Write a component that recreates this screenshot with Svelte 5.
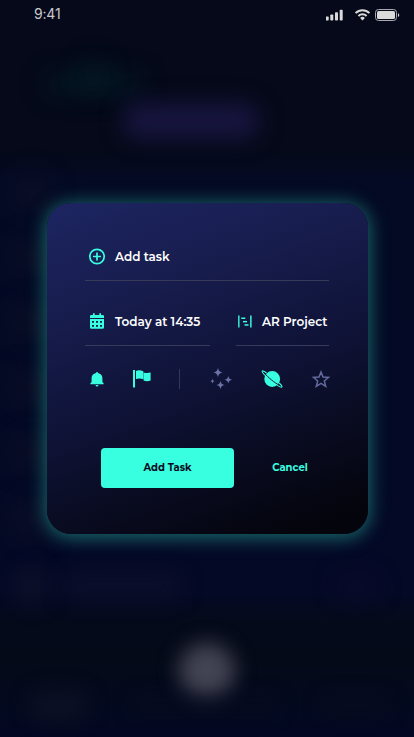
<script>
  const patches = [
    { x: 44, y: 74, w: 100, h: 20, blur: 12, color: 'rgba(3, 40, 48, .45)' },
    { x: 80, y: 60, w: 28, h: 30, blur: 12, color: 'rgba(3, 40, 48, .35)' },
    { x: 122, y: 103, w: 138, h: 36, blur: 11, color: '#17153f' },
    { x: 14, y: 176, w: 36, h: 34, blur: 12, color: '#0c0f26' },
    { x: 14, y: 240, w: 36, h: 34, blur: 12, color: '#0c0f26' },
    { x: 14, y: 305, w: 36, h: 34, blur: 12, color: '#0c0f26' },
    { x: 14, y: 370, w: 36, h: 34, blur: 12, color: '#0c0f26' },
    { x: 14, y: 436, w: 36, h: 34, blur: 12, color: '#0c0f26' },
    { x: 14, y: 502, w: 36, h: 34, blur: 12, color: '#0c0f26' },
    { x: 14, y: 569, w: 36, h: 34, blur: 10, color: '#0d1028' },
    { x: 62, y: 572, w: 120, h: 28, blur: 10, color: '#0b0e2a' },
    { x: 334, y: 574, w: 46, h: 24, blur: 10, color: '#080b2a' },
    { x: 179, y: 643, w: 56, h: 56, blur: 10, color: '#434453' },
    { x: 30, y: 692, w: 58, h: 28, blur: 10, color: '#0d1124' },
    { x: 130, y: 696, w: 150, h: 20, blur: 9, color: 'rgba(8, 12, 32, .5)' },
    { x: 320, y: 696, w: 70, h: 20, blur: 9, color: 'rgba(8, 12, 32, .7)' }
  ];
</script>

<div class="screen">
  <div class="backdrop" aria-hidden="true">
    {#each patches as p}
      <i style="left:{p.x}px;top:{p.y}px;width:{p.w}px;height:{p.h}px;background:{p.color};filter:blur({p.blur}px)"></i>
    {/each}
  </div>

  <header>
    <span class="time">9:41</span>
    <svg width="74" height="14" viewBox="326 8 74 14" fill="#dadada">
      <rect x="325.700" y="16.500" width="3" height="4" rx=".8" />
      <rect x="330.300" y="14.500" width="3" height="6" rx=".8" />
      <rect x="335" y="12.200" width="3" height="8.300" rx=".8" />
      <rect x="339.700" y="9.800" width="3" height="10.700" rx=".8" />
      <g fill="none" stroke="#dadada" stroke-width="2">
        <path d="M355.600 13.100a9.600 9.600 0 0 1 13.800 0" />
        <path d="M358.400 16a5.900 5.900 0 0 1 8.200 0" />
      </g>
      <path d="M360.100 18a3.400 3.400 0 0 1 4.800 0l-2.400 2.500z" />
      <rect x="375.500" y="9.500" width="21" height="11" rx="3" fill="none" stroke="#a9aab0" />
      <rect x="377" y="11" width="18" height="8" rx="1.600" />
      <path d="M398 13.200c1.700.8 1.700 2.900 0 3.700z" />
    </svg>
  </header>

  <main>
    <div class="field">
      <svg class="lead" width="24" height="24" viewBox="0 0 24 24" fill="none" stroke="#38ffe0" stroke-width="1.700">
        <circle cx="12" cy="11.500" r="7.200" />
        <path d="M12 7.500v8M8 11.500h8" />
      </svg>
      <span class="t1">Add task</span>
    </div>

    <div class="split">
      <div class="field date">
        <svg class="lead" width="24" height="24" viewBox="0 1 24 24" fill="#38ffe0">
          <path fill-rule="evenodd" d="M5 9V7.300Q5 6 6.300 6H8V4.300h1.700V6h4.600V4.300H16V6h1.700Q19 6 19 7.300V9zM5 10h14v8.300q0 1.500-1.500 1.500h-11Q5 19.800 5 18.300zM7 12v1.700h2V12zm4 0v1.700h2V12zm4 0v1.700h2V12zm-8 4v1.700h2V16zm4 0v1.700h2V16zm4 0v1.700h2V16z" />
        </svg>
        <span class="t2">Today at 14:35</span>
      </div>
      <div class="field project">
        <svg width="18" height="14" viewBox="0 .5 18 14" fill="#38ffe0">
          <rect x="2" y="1" width="1.600" height="12" opacity=".85" />
          <rect x="14" y="1" width="1.700" height="12" opacity=".85" />
          <rect x="5.300" y="3" width="4" height="1.500" />
          <rect x="7" y="6.400" width="4" height="1.500" />
          <rect x="8.500" y="9.700" width="4" height="1.500" />
        </svg>
        <span class="t3">AR Project</span>
      </div>
    </div>

    <div class="tools">
      <svg width="24" height="24" viewBox="0 0 24 24" fill="#38ffe0">
        <path d="M12 5q1 0 1 1c2.700.5 4.400 2.400 4.400 5v4l1.200 1.200V17.200H5.400v-1L6.600 15v-4c0-2.600 1.700-4.500 4.400-5q0-1 1-1zM10.500 18h3q-.2 1.500-1.500 1.500T10.500 18z" />
      </svg>
      <svg width="24" height="24" viewBox="0 0 24 24" fill="#38ffe0">
        <path d="M3 3h2v17.500H3zM6 4c2.500-1.200 5-.6 7.300.3v8C11 11.300 8.500 11.200 6 12zM13.600 5.500c2.500.8 4.700.6 7 .1v8c-2.300 1-4.900 1-7 0z" />
      </svg>
      <span class="divider"></span>
      <svg width="24" height="24" viewBox="0 0 24 24" fill="#6a72a6">
        <path d="M9 .7c.7 3.200 1.600 4.100 4.800 4.800-3.200.7-4.100 1.600-4.800 4.800-.7-3.200-1.600-4.100-4.800-4.800C7.400 4.800 8.300 3.900 9 .7zM19.300 8.900c.6 2.600 1.300 3.300 3.900 3.800-2.600.6-3.300 1.300-3.900 3.900-.6-2.600-1.300-3.300-3.800-3.900 2.500-.5 3.200-1.200 3.800-3.800zM11.500 13.800c.6 2.900 1.400 3.700 4.200 4.200-2.800.6-3.600 1.400-4.200 4.200-.6-2.800-1.400-3.600-4.200-4.200 2.800-.5 3.600-1.300 4.200-4.200zM3.500 11.400c.4 1.900.9 2.400 2.700 2.700-1.800.4-2.300.9-2.700 2.700-.4-1.800-.9-2.300-2.700-2.700 1.800-.3 2.300-.8 2.700-2.700z" />
      </svg>
      <svg width="24" height="24" viewBox="0 0 24 24">
        <circle cx="12.200" cy="12" r="7.900" fill="#38ffe0" />
        <g transform="rotate(39 12 12)" fill="none">
          <path d="M4 10.700C1.500 10.700-.6 11.300-.6 12.100c0 1.100 5.600 1.700 12.600 1.700s12.600-.6 12.600-1.700c0-.8-2.100-1.400-4.600-1.400" stroke="#38ffe0" stroke-width="1.200" />
          <path d="M2.500 12.200c4.500 1.100 14.500 1.100 19 0" stroke="#10123a" stroke-width=".9" />
        </g>
      </svg>
      <svg width="24" height="24" viewBox="0 0 24 24" fill="none" stroke="#626a9d" stroke-width="1.500">
        <path d="M12 5l2 5 5.500.4-4.200 3.600 1.400 5.300-4.700-2.900-4.700 2.900 1.400-5.300-4.200-3.600 5.500-.4z" />
      </svg>
    </div>

    <div class="actions">
      <button class="add"><span>Add Task</span></button>
      <button class="cancel"><span>Cancel</span></button>
    </div>
  </main>
</div>

<style>
  :global(body) { margin: 0; }
  .screen {
    position: relative;
    box-sizing: border-box;
    width: 414px;
    height: 737px;
    overflow: hidden;
    font-family: Montserrat, Inter, sans-serif;
    background: linear-gradient(#050919 0, #050919 150px, #040a24 182px, #040926 590px, #050a1a 624px, #050a19 665px, #030920 720px, #040722 100%);
  }
  .backdrop { position: absolute; inset: 0; }
  .backdrop i { position: absolute; border-radius: 28px; }
  header {
    position: relative;
    display: flex;
    align-items: center;
    justify-content: space-between;
    height: 30px;
    padding: 0 14px 0 34px;
  }
  .time { padding-bottom: 2px; font: 400 14px/28px Inter, sans-serif; color: #c9c9cd; letter-spacing: -.2px; }
  main {
    position: relative;
    box-sizing: border-box;
    width: 321px;
    height: 331px;
    margin: 173px 0 0 47px;
    padding: 30px 39px 0 38px;
    border-radius: 24px;
    background: linear-gradient(160deg, #1d2562 0%, #181e50 23%, #10143a 50%, #090b20 74%, #04040c 94%, #04040c 100%);
    box-shadow: 0 2px 18px 2px rgba(38, 170, 155, .58);
  }
  .field {
    display: flex;
    align-items: center;
    height: 47px;
    border-bottom: 1px solid #373b59;
    color: #fff;
    font-size: 12px;
    font-weight: 600;
    white-space: nowrap;
  }
  .lead { margin-right: 6px; }
  .split { display: flex; justify-content: space-between; margin-top: 17px; }
  .date { width: 125px; }
  .project { width: 93px; }
  .project svg { margin-right: 8px; }
  .tools { display: flex; align-items: center; height: 24px; margin-top: 21px; }
  .tools svg { flex: none; }
  .tools svg:nth-of-type(2) { margin-left: 21px; }
  .divider { flex: none; width: 1px; height: 20px; margin: 0 29px 0 25px; background: #343756; }
  .tools svg:nth-of-type(4) { margin-left: 27px; }
  .tools svg:nth-of-type(5) { margin-left: 25px; }
  .actions { display: flex; margin: 57px 0 0 16px; }
  button { flex: none; height: 40px; padding: 0 0 1px; border: 0; font: 700 10px Montserrat, Inter, sans-serif; }
  .add { width: 133px; border-radius: 4px; background: #38ffe0; color: #080b22; }
  .cancel { width: 112px; background: none; color: #38ffe0; }
</style>
